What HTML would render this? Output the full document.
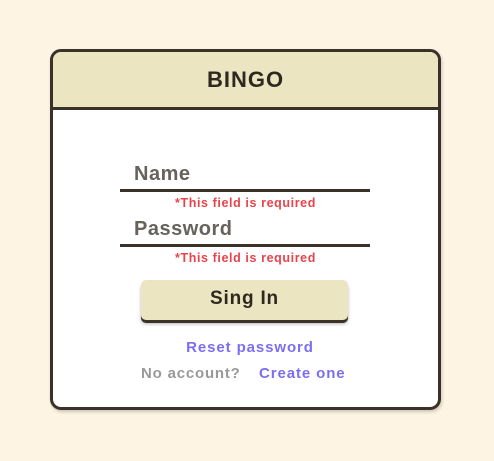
<!DOCTYPE html>
<html><head><style>
*{margin:0;padding:0;box-sizing:border-box}
body{width:494px;height:461px;background:#fdf4e3;font-family:"Liberation Sans",sans-serif;font-weight:bold;position:relative;overflow:hidden}
.card{position:absolute;left:50px;top:49px;width:391px;height:361px;background:#fff;border:3px solid #3a3128;border-radius:11px;overflow:hidden;box-shadow:1px 2px 3px rgba(0,0,0,.2)}
.hdr{height:58px;background:#ece5c2;border-bottom:3px solid #3a3128;text-align:center;font-size:22px;line-height:56px;color:#2f2820;letter-spacing:1px}
.t{position:absolute;white-space:nowrap}
.lbl{font-size:20px;color:#66625c;letter-spacing:.5px}
.line{position:absolute;left:67px;width:250px;height:3px;background:#3a3128}
.err{font-size:12.5px;color:#e8434b;left:0;width:385px;text-align:center;letter-spacing:.6px}
.btn{position:absolute;left:88px;top:228px;width:207px;height:40px;background:#ece5c2;border-radius:5px;box-shadow:0 3px 0 #3a3128,0 4px 3px rgba(0,0,0,.3);text-align:center;font-size:19px;line-height:38px;color:#2f2820;letter-spacing:.8px}
.link{color:#7b6ef0;font-size:15px;letter-spacing:.9px}
.gray{color:#999;font-size:15px;letter-spacing:.8px}
</style></head><body>
<div class="card">
<div class="hdr">BINGO</div>
<div class="t lbl" style="left:81px;top:111px">Name</div>
<div class="line" style="top:137px"></div>
<div class="t err" style="top:144px">*This field is required</div>
<div class="t lbl" style="left:81px;top:166px">Password</div>
<div class="line" style="top:192px"></div>
<div class="t err" style="top:199px">*This field is required</div>
<div class="btn">Sing In</div>
<div class="t link" style="left:0;width:394px;text-align:center;top:287px">Reset password</div>
<div class="t gray" style="left:88px;top:313px">No account?</div>
<div class="t link" style="left:206px;top:313px">Create one</div>
</div>
</body></html>
